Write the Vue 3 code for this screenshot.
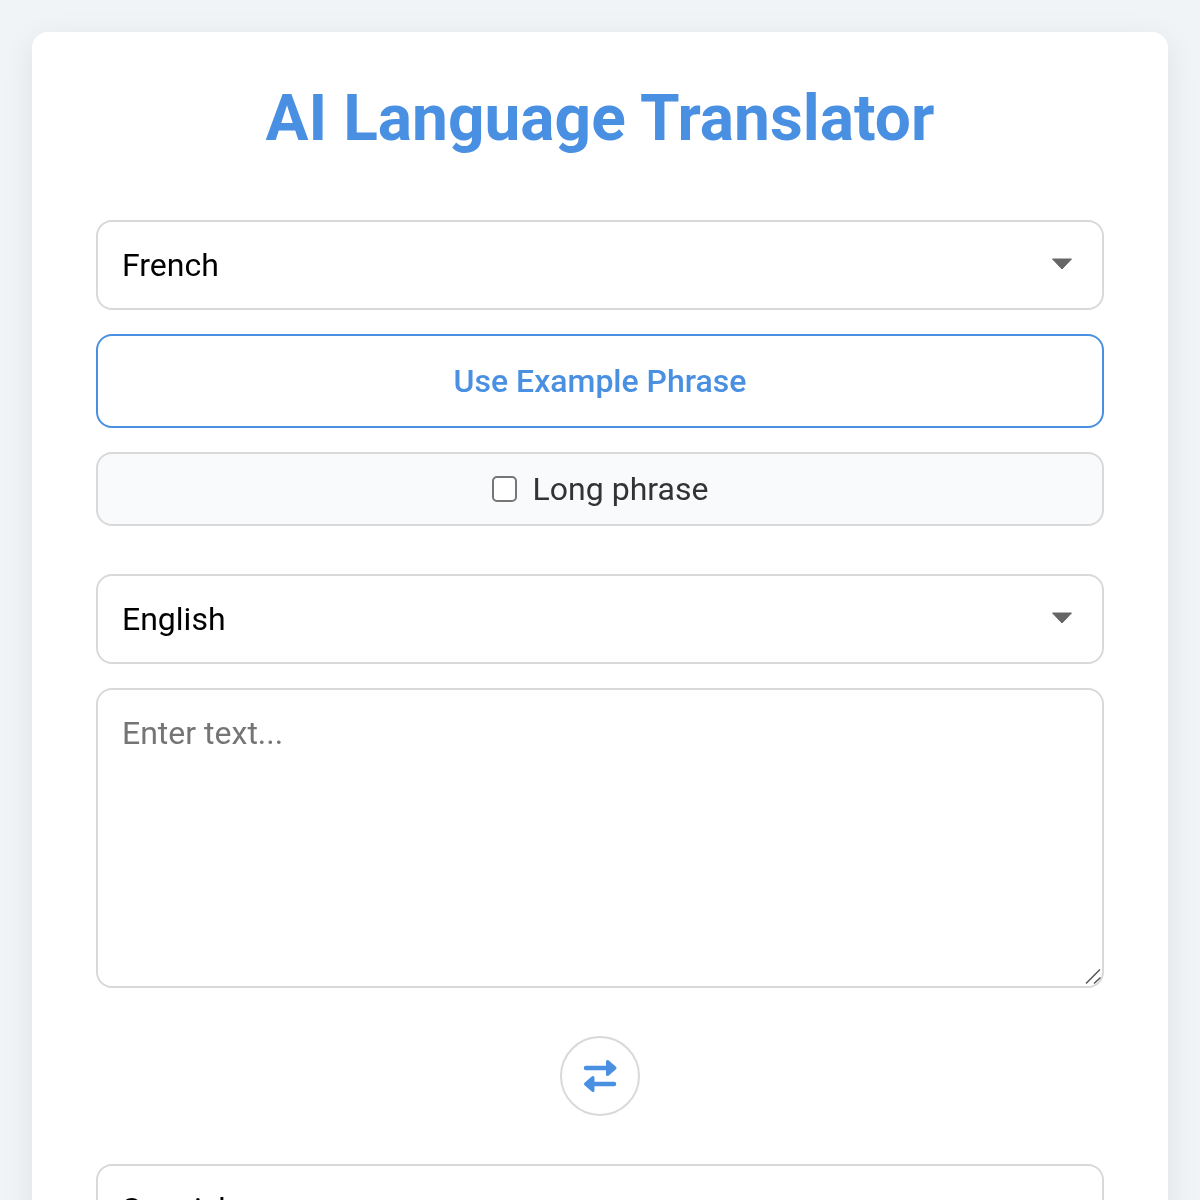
<script setup>
const languages = ['French', 'English', 'Spanish']
</script>

<template>
  <div class="page">
    <main class="card">
      <h1 class="title">AI Language Translator</h1>

      <section class="group">
        <div class="select-wrap">
          <select class="select" aria-label="Source language">
            <option v-for="l in languages" :key="l" :selected="l === 'French'">{{ l }}</option>
          </select>
          <svg class="caret" width="22" height="12" viewBox="0 0 22 12"><path d="M1.5 1h19L11 11z" fill="#666" stroke="#666" stroke-width="1" stroke-linejoin="round"/></svg>
        </div>
        <button class="example" type="button">Use Example Phrase</button>
        <label class="long">
          <input class="check" type="checkbox" />
          <span>Long phrase</span>
        </label>
      </section>

      <section class="group second">
        <div class="select-wrap">
          <select class="select" aria-label="Input language">
            <option v-for="l in languages" :key="l" :selected="l === 'English'">{{ l }}</option>
          </select>
          <svg class="caret" width="22" height="12" viewBox="0 0 22 12"><path d="M1.5 1h19L11 11z" fill="#666" stroke="#666" stroke-width="1" stroke-linejoin="round"/></svg>
        </div>
        <div class="text-wrap">
          <textarea class="text" placeholder="Enter text..."></textarea>
          <svg class="grip" width="18" height="18" viewBox="0 0 18 18"><path d="M1 14.5 15 .5M9 14.5l6.5-6" stroke="#555" stroke-width="1.5" fill="none"/></svg>
        </div>
      </section>

      <div class="swap-row">
        <button class="swap" type="button" aria-label="Swap languages">
          <svg width="36" height="36" viewBox="0 0 36 36">
            <path d="M4 10h22" stroke="#4a90e2" stroke-width="4.5" stroke-linecap="round"/>
            <path d="M25.5 3.5 33 10 25.5 16.5z" fill="#4a90e2" stroke="#4a90e2" stroke-width="3" stroke-linejoin="round"/>
            <path d="M32 26H11" stroke="#4a90e2" stroke-width="4.5" stroke-linecap="round"/>
            <path d="M11 19.5 3.5 26 11 32.5z" fill="#4a90e2" stroke="#4a90e2" stroke-width="3" stroke-linejoin="round"/>
          </svg>
        </button>
      </div>

      <section class="group">
        <div class="select-wrap">
          <select class="select" aria-label="Target language">
            <option v-for="l in languages" :key="l" :selected="l === 'Spanish'">{{ l }}</option>
          </select>
        </div>
      </section>
    </main>
  </div>
</template>

<style>
html, body { margin: 0; height: 1200px; overflow: hidden; background: #f0f4f7; }
</style>

<style scoped>
.page {
  padding: 32px 32px 0;
  font-family: Roboto, sans-serif;
  will-change: transform;
}
.card {
  background: #fff;
  border-radius: 16px;
  padding: 48px 64px 64px;
  box-shadow: 0 8px 32px rgba(0, 0, 0, 0.08);
  height: 1300px;
  box-sizing: border-box;
}
.title {
  margin: 0 0 62px;
  text-align: center;
  color: #4a90e2;
  font-size: 64px;
  line-height: 78px;
  font-weight: 700;
}
.group { display: flex; flex-direction: column; gap: 24px; }
.second { margin-top: 48px; }
.select-wrap { position: relative; }
.select {
  display: block;
  width: 100%;
  height: 90px;
  box-sizing: border-box;
  padding: 0 24px;
  border: 2px solid #d9d9d9;
  border-radius: 16px;
  background: #fff;
  font: 400 32px Roboto, sans-serif;
  color: #000;
  appearance: none;
  outline: none;
}
.caret { position: absolute; right: 31px; top: 38px; pointer-events: none; }
.example {
  height: 94px;
  box-sizing: border-box;
  border: 2px solid #4a90e2;
  border-radius: 16px;
  background: #fff;
  color: #4a90e2;
  font: 500 32px Roboto, sans-serif;
}
.long {
  height: 74px;
  box-sizing: border-box;
  border: 2px solid #d9d9d9;
  border-radius: 16px;
  background: #f8fafc;
  display: flex;
  align-items: center;
  justify-content: center;
  gap: 16px;
  font-size: 32px;
  color: #333;
}
.check {
  appearance: none;
  width: 25px;
  height: 26px;
  margin: 0;
  box-sizing: border-box;
  border: 2px solid #767676;
  border-radius: 5px;
  background: #fff;
}
.text-wrap { position: relative; }
.text {
  display: block;
  width: 100%;
  height: 300px;
  box-sizing: border-box;
  padding: 24px;
  border: 2px solid #d9d9d9;
  border-radius: 16px;
  font: 400 32px/38px Roboto, sans-serif;
  color: #000;
  resize: none;
  outline: none;
}
.text::placeholder { color: #757575; opacity: 1; }
.grip { position: absolute; right: 1px; bottom: 1px; pointer-events: none; }
.swap-row { display: flex; justify-content: center; margin: 48px 0; }
.swap {
  width: 80px;
  height: 80px;
  box-sizing: border-box;
  padding: 0;
  border: 2px solid #d9d9d9;
  border-radius: 50%;
  background: #fff;
  display: flex;
  align-items: center;
  justify-content: center;
}
</style>
